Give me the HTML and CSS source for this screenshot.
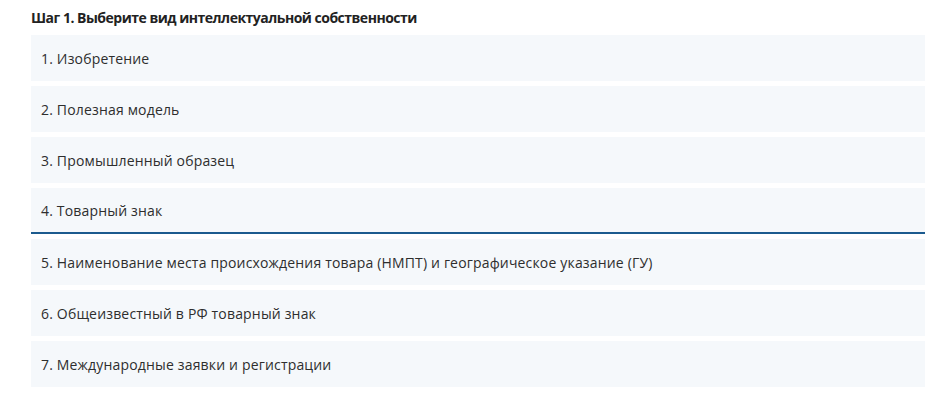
FILE: index.html
```html
<!DOCTYPE html>
<html lang="ru">
<head>
<meta charset="utf-8">
<link rel="stylesheet" href="styles.css">
</head>
<body>
<div class="step">
  <h2 class="step-title">Шаг 1. Выберите вид интеллектуальной собственности</h2>
  <ul class="options">
    <li class="option">1. Изобретение</li>
    <li class="option">2. Полезная модель</li>
    <li class="option">3. Промышленный образец</li>
    <li class="option option-active">4. Товарный знак</li>
    <li class="option">5. Наименование места происхождения товара (НМПТ) и географическое указание (ГУ)</li>
    <li class="option">6. Общеизвестный в РФ товарный знак</li>
    <li class="option">7. Международные заявки и регистрации</li>
  </ul>
</div>
</body>
</html>
```
FILE: styles.css
```css
html, body {
  margin: 0;
  padding: 0;
  background: #fff;
}
body {
  font-family: "Open Sans", "Noto Sans", sans-serif;
  color: #333;
}
.step {
  width: 894px;
  padding: 7px 0 0 31px;
}
.step-title {
  margin: 0 0 7px 0;
  font-size: 14px;
  line-height: 21px;
  font-weight: 700;
  letter-spacing: -0.5px;
  color: #222;
}
.options {
  list-style: none;
  margin: 0;
  padding: 0;
  display: flex;
  flex-direction: column;
  gap: 5px;
}
.option {
  height: 46px;
  box-sizing: border-box;
  display: flex;
  align-items: center;
  padding: 0 10px;
  background: #f5f8fb;
  font-size: 14px;
  letter-spacing: 0.17px;
  color: #2e2e2e;
}
.option-active {
  border-bottom: 2px solid #1b5a8e;
}
```
